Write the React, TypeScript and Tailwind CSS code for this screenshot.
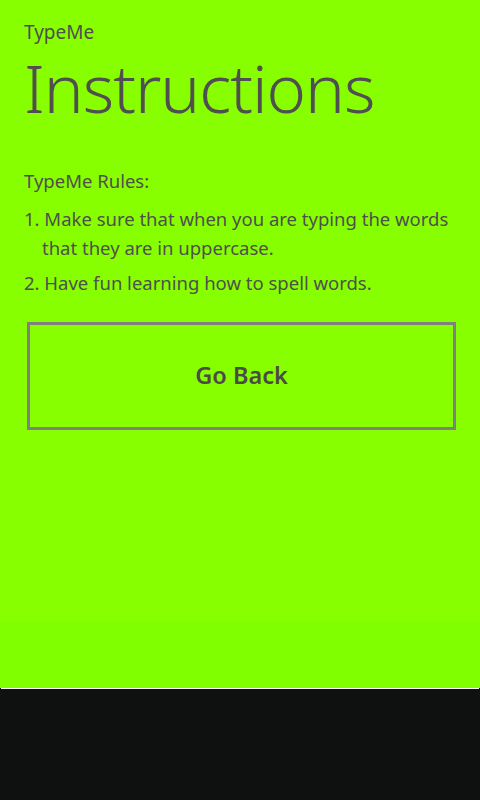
import React from "react";

export default function App() {
  const font = { fontFamily: '"Noto Sans", "Open Sans", sans-serif' };
  return (
    <div className="w-[480px] h-[800px] flex flex-col overflow-hidden" style={font}>
      <div className="flex-1 flex flex-col bg-[#88ff00]">
        <div className="h-[622px] flex flex-col px-6 text-[#4f4f4f]">
          <div className="mt-[19px] text-[19px] leading-[26px]">TypeMe</div>
          <div className="mt-[10px] text-[67px] leading-[64px] font-light tracking-[-1px]">Instructions</div>
          <div className="mt-[49px] text-[18.5px] leading-[26px]">TypeMe Rules:</div>
          <ol className="mt-[10px] text-[18.5px] leading-[29px] flex flex-col gap-[6px]">
            <li className="pl-[18px] -indent-[18px]">
              1. Make sure that when you are typing the words that they are in uppercase.
            </li>
            <li className="pl-[18px] -indent-[18px]">2. Have fun learning how to spell words.</li>
          </ol>
          <button className="mt-[25px] ml-[3px] w-[429px] h-[108px] border-[3px] border-[#808080] flex items-center justify-center text-[23.5px] font-semibold text-[#4a4a4a]">
            Go Back
          </button>
        </div>
        <div className="flex-1 bg-[#80ff00]" />
      </div>
      <div className="h-[2px] bg-[#0f1111] px-[1px]">
        <div className="h-[1px] bg-white" />
      </div>
      <div className="h-[110px] bg-[#0f1111]" />
    </div>
  );
}
